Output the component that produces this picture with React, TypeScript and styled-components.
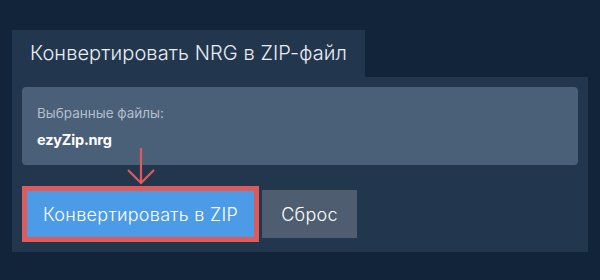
import styled, { createGlobalStyle } from "styled-components";

const GlobalStyle = createGlobalStyle`
  html, body {
    margin: 0;
    padding: 0;
    background: #12243a;
  }
  body {
    font-family: Inter, "Noto Sans", sans-serif;
    color: #eef2f6;
  }
`;

// START page layout ------------------------------------
const Page = styled.div`
  width: 600px;
  height: 280px;
  padding: 30px 12px 0;
  box-sizing: border-box;
`;

const Tab = styled.div`
  display: inline-block;
  height: 47px;
  line-height: 47px;
  padding: 0 18px;
  background: #22364e;
  font-size: 20px;
  font-weight: 300;
  color: #e9eef3;
  letter-spacing: 0.1px;
`;

const Panel = styled.div`
  position: relative;
  width: 576px;
  box-sizing: border-box;
  padding: 10px 10px 10px;
  background: #22364e;
`;
// END page layout ------------------------------------

// START selected files box ------------------------------------
const FilesBox = styled.div`
  height: 78px;
  box-sizing: border-box;
  padding: 17px 15px 0;
  background: #4a5f78;
  border-radius: 4px;
`;

const FilesLabel = styled.div`
  font-size: 13.5px;
  line-height: 18px;
  color: #b3bfcc;
`;

const FileName = styled.div`
  margin-top: 8px;
  font-size: 14.5px;
  font-weight: 700;
  line-height: 20px;
  letter-spacing: -0.2px;
  color: #ffffff;
`;
// END selected files box ------------------------------------

// START buttons ------------------------------------
const ButtonRow = styled.div`
  display: flex;
  align-items: center;
  gap: 3px;
  margin-top: 21px;
`;

const Highlight = styled.div`
  display: flex;
  border: 5px solid #df5b5b;
`;

const Button = styled.button<{ $variant: "primary" | "muted" }>`
  height: ${(p) => (p.$variant === "primary" ? "46px" : "48px")};
  padding: 0 ${(p) => (p.$variant === "primary" ? "16px" : "19px")};
  border: none;
  border-radius: 0;
  background: ${(p) => (p.$variant === "primary" ? "#4c9be6" : "#4e5e70")};
  color: #ffffff;
  font-family: Inter, "Noto Sans", sans-serif;
  font-size: 18px;
  font-weight: 300;
  letter-spacing: 0.3px;
  cursor: pointer;
`;

const ArrowMark = styled.svg`
  position: absolute;
  left: 114px;
  top: 70px;
`;
// END buttons ------------------------------------

export default function App() {
  return (
    <>
      <GlobalStyle />
      <Page>
        <Tab>Конвертировать NRG в ZIP-файл</Tab>
        <Panel>
          <FilesBox>
            <FilesLabel>Выбранные файлы:</FilesLabel>
            <FileName>ezyZip.nrg</FileName>
          </FilesBox>
          <ButtonRow>
            <Highlight>
              <Button $variant="primary">Конвертировать в ZIP</Button>
            </Highlight>
            <Button $variant="muted">Сброс</Button>
          </ButtonRow>
          <ArrowMark width="30" height="38" viewBox="0 0 30 38">
            <path
              d="M15 1 L15 36 M2 23 L15 36 L28 23"
              fill="none"
              stroke="#df5b5b"
              strokeWidth="2.2"
            />
          </ArrowMark>
        </Panel>
      </Page>
    </>
  );
}
